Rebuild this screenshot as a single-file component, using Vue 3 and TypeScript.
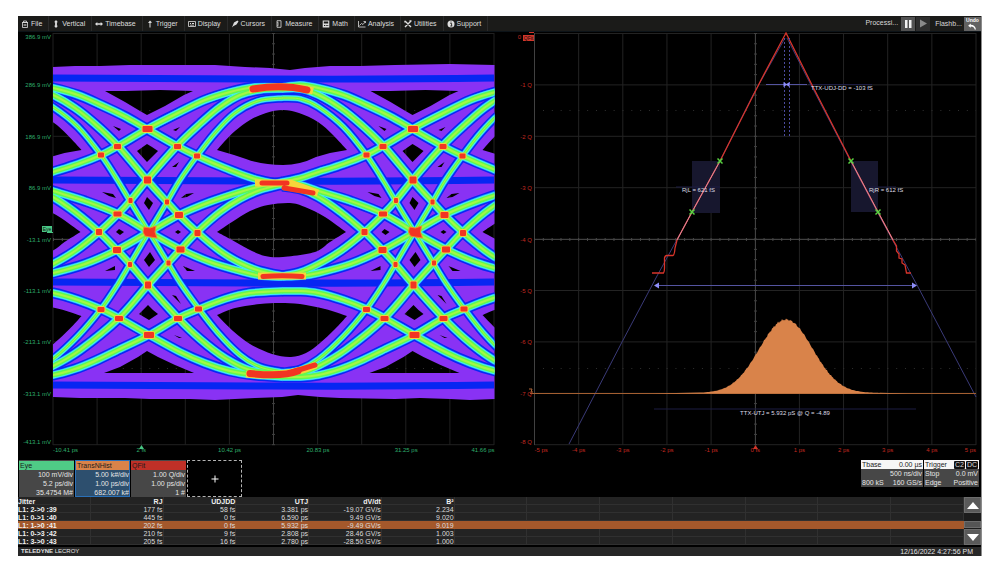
<script setup lang="ts">
type Point = [number, number]

interface Trace {
  points: Point[]
  thin?: boolean
}

interface Descriptor {
  name: string
  kind: string
  lines: string[]
}

const PERIOD = 265.5

const menu = [
  'File', 'Vertical', 'Timebase', 'Trigger', 'Display', 'Cursors',
  'Measure', 'Math', 'Analysis', 'Utilities', 'Support',
]

/* Catmull-Rom spline through the given points */
function spline(points: Point[]): string {
  let d = `M${points[0][0]} ${points[0][1]}`
  for (let i = 0; i < points.length - 1; i++) {
    const a = points[Math.max(i - 1, 0)]
    const b = points[i]
    const c = points[i + 1]
    const e = points[Math.min(i + 2, points.length - 1)]
    const x1 = b[0] + (c[0] - a[0]) / 6
    const y1 = b[1] + (c[1] - a[1]) / 6
    const x2 = c[0] - (e[0] - b[0]) / 6
    const y2 = c[1] - (e[1] - b[1]) / 6
    d += `C${x1.toFixed(1)} ${y1.toFixed(1)} ${x2.toFixed(1)} ${y2.toFixed(1)} ${c[0]} ${c[1]}`
  }
  return d
}

/* The twelve PAM4 level transitions over one unit interval */
const traces: Trace[] = [
  { points: [[17, 87], [35, 85], [53, 88], [78, 95], [101, 105], [124, 116], [147, 129], [177, 146], [197, 156], [225, 168], [255, 179], [283, 185]] },
  { points: [[17, 182], [35, 178], [53, 172], [78, 164], [101, 155], [118, 146], [147, 129], [178, 113], [205, 100], [230, 92], [255, 87], [283, 87]] },
  { points: [[17, 89], [35, 89], [53, 95], [75, 108], [95, 124], [118, 146], [147, 180], [167, 202], [179, 215], [197, 232], [220, 251], [240, 263], [260, 271], [283, 276]] },
  { points: [[17, 276], [35, 272], [53, 264], [75, 251], [99, 232], [118, 214], [130, 201], [147, 180], [177, 146], [200, 124], [220, 107], [240, 95], [260, 90], [283, 89]] },
  { points: [[17, 98], [35, 99], [53, 107], [78, 127], [101, 155], [118, 181], [130, 201], [149, 232], [168, 263], [181, 284], [199, 309], [218, 333], [240, 355], [260, 367], [283, 372]], thin: true },
  { points: [[17, 372], [35, 369], [53, 359], [78, 336], [101, 309], [118, 284], [130, 264], [149, 232], [167, 202], [180, 180], [197, 156], [215, 133], [235, 113], [258, 101], [283, 98]], thin: true },
  { points: [[17, 182], [35, 185], [53, 191], [85, 201], [118, 214], [149, 232], [180, 249], [210, 262], [240, 271], [262, 276], [283, 277]] },
  { points: [[17, 277], [35, 276], [53, 273], [85, 264], [117, 250], [149, 232], [179, 215], [210, 202], [240, 192], [262, 186], [283, 182]] },
  { points: [[17, 186], [35, 189], [53, 197], [75, 212], [99, 232], [117, 250], [130, 264], [148, 285], [178, 318], [200, 339], [225, 358], [250, 370], [283, 374]] },
  { points: [[17, 374], [35, 373], [53, 366], [80, 350], [119, 318], [148, 285], [168, 263], [180, 250], [197, 232], [220, 212], [240, 199], [260, 190], [283, 184]] },
  { points: [[17, 291], [35, 291], [53, 293], [78, 300], [101, 309], [119, 318], [149, 335], [180, 352], [205, 363], [230, 371], [255, 375], [283, 377]] },
  { points: [[17, 377], [35, 377], [53, 375], [75, 369], [95, 361], [120, 349], [149, 335], [178, 318], [199, 309], [225, 299], [250, 293], [283, 291]] },
]
const tracePaths = traces.map((t) => ({ d: spline(t.points), thin: !!t.thin }))
const layers = ['navy', 'azure', 'cyan', 'green', 'lime']

const shifts = [-PERIOD, 0, PERIOD]
const unitShifts = [0, PERIOD]

/* Regions of the eye with no hits, for one unit interval */
const openings = [
  spline([[217, 150], [224, 142], [235, 131], [250, 120], [266, 113], [283, 110], [299, 113], [318, 122], [333, 135], [347, 150]]) +
    'L330 153L316 157Q300 165 283 165Q262 165 246 159L234 155Z',
  spline([[217, 232], [232, 222], [250, 211], [268, 205], [290, 203], [305, 207], [325, 217], [346, 232]]) +
    spline([[346, 232], [330, 242], [315, 252], [283, 257], [265, 256], [248, 249], [232, 240], [217, 232]]).replace('M', 'L') + 'Z',
  spline([[217, 315], [235, 308], [260, 304], [280, 303], [300, 304], [325, 309], [347, 316]]) +
    spline([[347, 316], [335, 329], [320, 343], [306, 353], [291, 357], [272, 354], [250, 344], [233, 331], [217, 315]]).replace('M', 'L') + 'Z',
]
const gaps = [
  'M105 91L125 91 160 90 193 91 184 95 165 106 147 115 140 111 125 102Z',
  'M147 351L158 357 175 365 194 373 104 373 120 367 138 357Z',
  'M147 144L152 147 158 151 147 162 137 151Z',
  'M148 305L153 310 158 314 149 320 139 314Z',
  'M147 197L153 203 149 210 144 203Z',
  'M150 252L155 260 149 267 144 260Z',
  'M116 232L119 229 124 232 120 235Z',
  'M175 232L178 230 181 232 178 234Z',
  'M113 126L121 129 119 131Z',
  'M173 130L180 127 176 131Z',
  'M102 192L113 194 116 198 109 196Z',
  'M181 198L186 194 194 193 187 197Z',
  'M172 167L179 162 176 167Z',
  'M105 271L115 266 115 270Z',
  'M183 266L195 271 187 271Z',
  'M172 295L176 296 181 304Z',
  'M174 335L182 338 179 338Z',
]

/* Brightest spots where traces cross: x, y, width, height */
const hits: number[][] = [
  [147.5, 129, 10, 6], [117.5, 146.5, 7, 5], [177.5, 146.5, 7, 5], [101, 155, 6, 5],
  [197, 156, 6, 5], [147.5, 180, 7, 7], [130.5, 200.5, 4, 5], [167, 202, 4, 5],
  [117.5, 214, 8, 5], [179, 215, 8, 6], [99, 232, 6, 6], [197.5, 233, 6, 6],
  [117, 250, 8, 6], [180.5, 249.5, 8, 6], [130, 264.5, 4, 5], [168.5, 263, 4, 5],
  [148, 285, 6, 7], [101, 309.5, 7, 5], [198.5, 309, 7, 5], [119, 318.5, 8, 5],
  [178, 318.5, 8, 5], [149, 335, 10, 6],
]

const flatLevels = [78, 180, 282, 385]

const leftCols = Array.from({ length: 11 }, (_, i) => 53 + i * 44.1)
const rightCols = Array.from({ length: 11 }, (_, i) => 534.5 + i * 44.15)
const rows = Array.from({ length: 9 }, (_, i) => 33.5 + i * 51.4)
const minorRows = Array.from({ length: 41 }, (_, i) => 33.5 + i * 10.28)

const voltLabels = ['386.9', '286.9', '186.9', '86.9', '-13.1', '-113.1', '-213.1', '-313.1', '-413.1']
const labelY = (i: number): number => (i === 0 ? 39 : i === 8 ? 444 : 36 + i * 51.4)
const timeLabels = ['-10.41 ps', '2 fs', '10.42 ps', '20.83 ps', '31.25 ps', '41.66 ps']

function anchor(i: number, last: number): string {
  return i === 0 ? 'start' : i === last ? 'end' : 'middle'
}

function histogram(): string {
  let d = 'M652 393.5'
  for (let x = 700; x <= 880; x++) {
    const z = (x - 786) / 26.5
    const ripple = Math.sin(x * 2.3) * Math.cos(x * 0.9) * 1.3
    const bell = Math.exp((-z * z) / 2)
    d += `L${x} ${(393 - 73.5 * bell - ripple * Math.sqrt(bell)).toFixed(1)}`
  }
  return d + 'L908 393.5Z'
}
const histogramPath = histogram()

const crosses: Point[] = [[720, 161], [692, 212], [851, 161], [878, 212]]

const descriptors: Descriptor[] = [
  { name: 'Eye', kind: 'eye', lines: ['100 mV/div', '5.2 ps/div', '35.4754 M#'] },
  { name: 'TransNHist', kind: 'hist', lines: ['5.00 k#/div', '1.00 ps/div', '682.007 k#'] },
  { name: 'QFit', kind: 'qfit', lines: ['1.00 Q/div', '1.00 ps/div', '1 #'] },
]

const heads = ['Jitter', 'RJ', 'UDJDD', 'UTJ', 'dV/dt', 'B²']
const measurements = [
  ['L1: 2->0 :39', '177 fs', '58 fs', '3.381 ps', '-19.07 GV/s', '2.234'],
  ['L1: 0->1 :40', '445 fs', '0 fs', '6.590 ps', '9.49 GV/s', '9.020'],
  ['L1: 1->0 :41', '202 fs', '0 fs', '5.932 ps', '-9.49 GV/s', '9.019'],
  ['L1: 0->3 :42', '210 fs', '9 fs', '2.808 ps', '28.46 GV/s', '1.003'],
  ['L1: 3->0 :43', '205 fs', '16 fs', '2.780 ps', '-28.50 GV/s', '1.000'],
]
const selectedRow = 2
</script>

<template>
  <main class="scope">
    <header class="topbar">
      <nav class="menu" aria-label="Main menu">
        <button v-for="item in menu" :key="item" type="button" class="menu-item">
          <svg class="icon" viewBox="0 0 8 8" aria-hidden="true">
            <g v-if="item === 'File'" class="line"><path d="M1.5 2.5h5v5h-5zM2.5 2.5V1h3v1.5M1 2.5h6M3.2 4v2M4.8 4v2" /></g>
            <path v-else-if="item === 'Vertical'" d="M4 0L6 2.300H4.900V5.700H6L4 8 2 5.700H3.100V2.300H2Z" />
            <path v-else-if="item === 'Timebase'" d="M0 4L2.300 2V3.300H5.700V2L8 4 5.700 6V4.700H2.300V6Z" />
            <g v-else-if="item === 'Trigger'"><path d="M3.500 1h1v6.500h-1zM2 3L4 .5 6 2.500 4.500 3Z" /></g>
            <g v-else-if="item === 'Display'"><path class="line" d="M.5 1.500h7v5h-7z" /><path d="M2 3h1v1H2zM4 3h2v1H4zM2 4.700h4v.8H2z" /></g>
            <path v-else-if="item === 'Cursors'" d="M6.500 .5L7.500 1.500 5.500 4.500 2.500 6 1 7.500 2 5 3 2.500Z" />
            <g v-else-if="item === 'Measure'" class="line"><path d="M2 .7h4v6.600H2zM2 2.300h1.500M2 4h2M2 5.700h1.500" /></g>
            <g v-else-if="item === 'Math'"><path fill-rule="evenodd" d="M.7.5h6.600v7H.7zM1.800 1.500v2h4.400v-2zM2 5v1h1V5zM3.700 5v1h1V5zM5.300 5v1h1V5z" /></g>
            <g v-else-if="item === 'Analysis'" class="line"><path d="M.5 1v6h7M1.500 5.500L3.500 3.500 5 4.500 7.300 1.700M5.500 1.500h2v1.500" /></g>
            <g v-else-if="item === 'Utilities'" class="line thick"><path d="M1 1L7 7M7 1L1 7M1 .7V2.500M5.500 1h2" /></g>
            <g v-else><circle cx="4" cy="4" r="3.500" /><path class="cut" d="M3.300 3.400h1.300v2.500M3.300 6h2M3.500 2h1" /></g>
          </svg>
          <span>{{ item }}</span>
        </button>
      </nav>
      <div class="status">
        <span class="state">Processi...</span>
        <button type="button" class="tool" aria-label="Pause">
          <svg viewBox="0 0 14 14" aria-hidden="true"><path d="M4 3H6.500V11H4ZM8 3H10.500V11H8Z" /></svg>
        </button>
        <button type="button" class="tool dim" aria-label="Play">
          <svg viewBox="0 0 14 14" aria-hidden="true"><path d="M4 2.500L11 6.500 4 10.500Z" /></svg>
        </button>
        <span class="flash">Flashb...</span>
        <button type="button" class="undo">
          <span>Undo</span>
          <svg viewBox="0 0 12 8" aria-hidden="true"><path d="M1 3L4 .5V2Q9 2 10 7.500H8.500Q8 4 4 4V5.500Z" /></svg>
        </button>
      </div>
    </header>

    <section class="plots">
      <svg class="plot" viewBox="18 32 496 427" role="img" aria-label="Eye diagram">
        <defs>
          <clipPath id="eye-clip"><rect x="53" y="33" width="441.500" height="412" /></clipPath>
          <mask id="eye-mask" maskUnits="userSpaceOnUse" x="18" y="32" width="496" height="427">
            <path fill="#fff" d="M53 67L75 66 100 66 130 65 175 65 215 65 245 67 270 68 290 70 305 68 330 66 360 66 395 65 450 64 495 65V399L470 400 450 399 420 398 395 399 340 398 320 397 298 395 282 397 255 398 215 400 190 399 150 399 125 398 80 398 53 397Z" />
            <g v-for="s in shifts" :key="s" :transform="`translate(${s} 0)`">
              <path v-for="(d, i) in openings" :key="i" :d="d" fill="#000" />
            </g>
            <g v-for="s in unitShifts" :key="s" :transform="`translate(${s} 0)`">
              <path v-for="(d, i) in gaps" :key="i" :d="d" fill="#000" />
            </g>
          </mask>
        </defs>

        <g class="grid">
          <path v-for="x in leftCols" :key="x" :d="`M${x} 33V445`" />
          <path v-for="y in rows" :key="y" :d="`M53 ${y}H494`" />
        </g>
        <path class="axis" d="M273.500 33V445M53 239.500H494" />
        <path v-for="y in minorRows" :key="y" class="axis" :d="`M272 ${y}h3`" />
        <path class="axis-ticks" d="M53 239.500H494" />
        <path class="dots" d="M61 110.500H494M61 368.500H494" />

        <g clip-path="url(#eye-clip)">
          <g mask="url(#eye-mask)"><rect class="violet" x="53" y="60" width="442" height="345" /></g>
          <path v-for="y in flatLevels" :key="y" class="flat" :d="`M53 ${y}Q150 ${y + 0.5} 273 ${y + 1}T494 ${y}`" />
          <g v-for="layer in layers" :key="layer" :class="['layer', layer]">
            <g v-for="s in shifts" :key="s" :transform="`translate(${s} 0)`">
              <path v-for="(t, i) in tracePaths" :key="i" :d="t.d" :class="{ thin: t.thin }" />
            </g>
          </g>

          <g class="warm">
            <path d="M249 90Q282 83 313 91M255 183H290L318 193M258 276H306M246 374Q285 378 316 365" />
          </g>
          <g class="hot">
            <path d="M253 89Q282 84 307 90" />
            <path class="mid" d="M262 183H287M284 188L313 193" />
            <path class="mid" d="M263 276.500Q282 275 302 276.500" />
            <path d="M250 373.500Q283 377 298 371" />
            <path class="mid" d="M292 372L315 365" />
          </g>

          <g v-for="s in unitShifts" :key="s" :transform="`translate(${s} 0)`">
            <rect v-for="(h, i) in hits" :key="`w${i}`" class="halo" :x="h[0] - h[2] / 2 - 1" :y="h[1] - h[3] / 2 - 1" :width="h[2] + 2" :height="h[3] + 2" rx="3" />
            <rect v-for="(h, i) in hits" :key="`r${i}`" class="core" :x="h[0] - h[2] / 2" :y="h[1] - h[3] / 2" :width="h[2]" :height="h[3]" rx="1" />
            <path class="core ring" d="M144 227L150 228 156 226 155 232 157 238 150 237 145 236 143 232Z" />
          </g>
        </g>

        <g class="label green-text">
          <text v-for="(v, i) in voltLabels" :key="v" x="51" :y="labelY(i)" text-anchor="end">{{ v }} mV</text>
          <text v-for="(t, i) in timeLabels" :key="t" :x="53 + i * 88.3" y="452" :text-anchor="anchor(i, 5)">{{ t }}</text>
        </g>
        <path class="green-mark" d="M141.500 445L144 449H139Z" />
        <rect class="green-mark" x="42" y="226" width="10" height="6" />
        <path class="green-mark" d="M47 232h6v1h-6z" />
        <text class="badge" x="47" y="231" text-anchor="middle">Eye</text>
      </svg>

      <svg class="plot" viewBox="514 32 467 427" role="img" aria-label="Q-scale jitter fit">
        <g class="grid strong">
          <path v-for="x in rightCols" :key="x" :d="`M${x} 33V445`" />
          <path v-for="y in rows" :key="y" :d="`M534 ${y}H976`" />
        </g>
        <path class="axis" d="M534.500 33V445M755.500 33V445M534 239.500H976" />
        <path v-for="y in minorRows" :key="y" class="axis" :d="`M754 ${y}h3`" />
        <path class="axis-ticks" d="M534 239.500H976" />
        <path class="dots" d="M543 110.500H976M543 368.500H976" />

        <rect class="zone" x="692" y="161" width="28" height="52" />
        <rect class="zone" x="851" y="161" width="27" height="51" />
        <path class="faint" d="M676 187H720M870 187H896M808 84.500H872M654 409H916" />

        <path class="fit" d="M569 444L622 342 657 276 719 163 753 95 785 38M787 38L812 87 851 162 880 217 917 285 976 397" />
        <path class="curve" d="M652 273H663.500Q664.500 272 664.500 268V258Q665 255.500 667 255.500H673Q674.500 255 675 248L677 240 692 212 720 161 760 82 786 33 812 85 851 161 878 212 893 240 896.500 246V251L899 254V258L902 259V263L905 265 906.500 273H911" />
        <path class="overlay" d="M677 240L692 212 720 161M851 161L878 212 893 240" />

        <path class="bound" d="M784.500 38V136M789.500 38V136" />
        <path class="span" d="M766 84.500H807M657 285.500H915" />
        <path class="arrow" d="M654 285.500L659 282.500V288.500ZM917 285.500L912 282.500V288.500ZM783.500 82L786.500 84 789.500 82V87L786.500 85 783.500 87Z" />

        <path class="base" d="M530 393.500H976" />
        <path class="bell" :d="histogramPath" />

        <path v-for="c in crosses" :key="c[0]" class="cross" :d="`M${c[0] - 2.5} ${c[1] - 2.5}l5 5m0-5l-5 5`" />

        <g class="label red-text">
          <text x="521" y="39" text-anchor="end">0</text>
          <text v-for="n in 8" :key="n" x="532" :y="labelY(n)" text-anchor="end">-{{ n }} Q</text>
          <text v-for="n in 11" :key="`x${n}`" :x="490.350 + n * 44.150" y="452" :text-anchor="anchor(n - 1, 10)">{{ n === 6 ? '0 fs' : `${n - 6} ps` }}</text>
        </g>
        <rect class="red-mark" x="523" y="35" width="11" height="6" />
        <path class="red-mark" d="M529 32h5v1h-5zM755.500 445L758 449H753Z" />
        <text class="badge" x="528.500" y="40" text-anchor="middle">QFit</text>
        <path class="orange-mark" d="M529 389h3l-1 3h2" />

        <g class="label note">
          <text x="811" y="90">TTX-UDJ-DD = -103 fS</text>
          <text x="682" y="192">RjL = 621 fS</text>
          <text x="869" y="192">RjR = 612 fS</text>
          <text x="785" y="415" text-anchor="middle">TTX-UTJ = 5.932 pS @ Q = -4.89</text>
        </g>
      </svg>
    </section>

    <section class="descriptors">
      <button v-for="d in descriptors" :key="d.name" type="button" :class="['card', d.kind]">
        <span class="card-head">{{ d.name }}</span>
        <span v-for="line in d.lines" :key="line" class="card-line">{{ line }}</span>
      </button>
      <button type="button" class="add" aria-label="Add trace">
        <svg viewBox="0 0 8 8" aria-hidden="true"><path d="M4 .5V7.500M.5 4H7.500" /></svg>
      </button>
      <div class="acquisition">
        <button type="button" class="card wide">
          <span class="card-head split"><span>Tbase</span><span>0.00 µs</span></span>
          <span class="card-line">500 ns/div</span>
          <span class="card-line split"><span>800 kS</span><span>160 GS/s</span></span>
        </button>
        <button type="button" class="card">
          <span class="card-head split"><span>Trigger</span><span class="chips"><b>C2</b><b>DC</b></span></span>
          <span class="card-line split"><span>Stop</span><span>0.0 mV</span></span>
          <span class="card-line split"><span>Edge</span><span>Positive</span></span>
        </button>
      </div>
    </section>

    <section class="results">
      <table>
        <thead>
          <tr>
            <th v-for="h in heads" :key="h" scope="col">{{ h }}</th>
            <td v-for="n in 7" :key="n"></td>
          </tr>
        </thead>
        <tbody>
          <tr v-for="(row, r) in measurements" :key="r" :class="{ selected: r === selectedRow }">
            <th scope="row">{{ row[0] }}</th>
            <td v-for="(cell, c) in row.slice(1)" :key="c">{{ cell }}</td>
            <td v-for="n in 7" :key="`e${n}`"></td>
          </tr>
        </tbody>
      </table>
      <div class="scroller">
        <button type="button" aria-label="Scroll up"><svg viewBox="0 0 12 7" aria-hidden="true"><path d="M0 7L6 0 12 7Z" /></svg></button>
        <div class="thumb"></div>
        <button type="button" aria-label="Scroll down"><svg viewBox="0 0 12 7" aria-hidden="true"><path d="M0 0L6 7 12 0Z" /></svg></button>
      </div>
    </section>

    <footer class="footer">
      <span><strong>TELEDYNE</strong> LECROY</span>
      <time datetime="2022-12-16T16:27:56">12/16/2022 4:27:56 PM</time>
    </footer>
  </main>
</template>

<style>
body {
  background: #fff;
  padding: 16px 21px 0 18px;
}
</style>

<style scoped>
.scope {
  background: #000;
  color: #d8d8d8;
  font-family: "Liberation Sans", Arial, sans-serif;
  font-size: 7px;
  box-shadow: 1px 0 #8c8c8c;
}

button {
  margin: 0;
  padding: 0;
  border: 0;
  font: inherit;
  color: inherit;
  background: none;
}

.topbar {
  display: flex;
  justify-content: space-between;
  height: 15px;
  background: #1b1b19;
  border-bottom: 1px solid #0c1318;
}

.menu {
  display: flex;
}

.menu-item {
  display: flex;
  align-items: center;
  gap: 2px;
  padding: 0 6px 0 3px;
  border-right: 1px solid #2b2b2b;
  color: #dedede;
}

.icon {
  width: 8px;
  height: 8px;
  fill: #dedede;
}

.line {
  fill: none;
  stroke: #dedede;
  stroke-width: 0.8;
}

.thick {
  stroke-width: 1.4;
}

.cut {
  fill: none;
  stroke: #1b1b19;
  stroke-width: 0.9;
}

.status {
  display: flex;
  align-items: center;
  gap: 1px;
}

.state {
  padding: 0 2px 2px 0;
}

.flash {
  padding: 0 1px 0 4px;
}

.tool {
  display: flex;
  width: 14px;
  height: 14px;
  background: #525252;
  fill: #f2f2f2;
}

.tool.dim {
  background: #2e2e2e;
  fill: #8a8a8a;
}

.undo {
  display: flex;
  flex-direction: column;
  align-items: center;
  width: 17px;
  height: 14px;
  background: #626262;
  color: #fff;
  fill: #fff;
  font-size: 5px;
  font-weight: bold;
  line-height: 6px;
}

.undo svg {
  width: 11px;
  height: 7px;
}

.plots {
  display: grid;
  grid-template-columns: 496fr 467fr;
}

.plot {
  display: block;
  width: 100%;
  height: auto;
  fill: none;
}

.grid {
  stroke: #202020;
  stroke-width: 1;
}

.grid.strong {
  stroke: #232323;
}

.axis {
  stroke: #414141;
  stroke-width: 1;
}

.axis-ticks {
  stroke: #484848;
  stroke-width: 3;
  stroke-dasharray: 1 7.83;
}

.dots {
  stroke: #303030;
  stroke-width: 1;
  stroke-dasharray: 1 7.83;
}

.violet {
  fill: #8932f4;
}

.flat {
  stroke: #0726f2;
  stroke-width: 7;
}

.navy {
  stroke: #0828f5;
  stroke-width: 11;
}

.azure {
  stroke: #1c9cff;
  stroke-width: 8;
}

.cyan {
  stroke: #45eef0;
  stroke-width: 7;
}

.green {
  stroke: #62f84e;
  stroke-width: 5;
}

.lime {
  stroke: #a4f744;
  stroke-width: 2;
}

.navy .thin {
  stroke-width: 9;
}

.azure .thin {
  stroke-width: 6;
}

.cyan .thin {
  stroke-width: 5;
}

.green .thin {
  stroke-width: 3;
}

.lime .thin {
  stroke-width: 1;
}

.warm {
  stroke: #f7d43a;
  stroke-width: 7;
}

.hot {
  stroke: #f23522;
  stroke-width: 7;
  stroke-linecap: round;
}

.mid {
  stroke-width: 5;
}

.halo {
  fill: #f6d23c;
}

.core {
  fill: #f23522;
}

.ring {
  stroke: #f28a2c;
  stroke-width: 1;
}

.label {
  font-size: 6px;
}

.green-text {
  fill: #2fae6c;
}

.red-text {
  fill: #c42a20;
}

.note {
  fill: #dcdce4;
}

.green-mark {
  fill: #49c684;
}

.red-mark {
  fill: #d2362a;
}

.orange-mark {
  stroke: #b5683a;
}

.badge {
  font-size: 5px;
  fill: #101010;
}

.zone {
  fill: #17172e;
}

.faint {
  stroke: #1d1d42;
}

.fit {
  stroke: #3a3a78;
  stroke-width: 1;
}

.curve {
  stroke: #d8352b;
  stroke-width: 1.3;
}

.overlay {
  stroke: #d98a9c;
  stroke-width: 1;
}

.bound {
  stroke: #4c4c9e;
  stroke-dasharray: 2 2;
}

.span {
  stroke: #5454a0;
  stroke-width: 1;
}

.arrow {
  fill: #8e8efa;
}

.base {
  stroke: #a35f31;
}

.bell {
  fill: #d9834a;
}

.cross {
  stroke: #58d240;
  stroke-width: 1.5;
}

.descriptors {
  display: flex;
  gap: 1px;
  padding: 1px 2px 0 1px;
}

.card {
  display: block;
  box-sizing: border-box;
  width: 55px;
  background: #474747;
  color: #e6e6e6;
  text-align: right;
  line-height: 9px;
}

.card.wide {
  width: 62px;
}

.card-head,
.card-line {
  display: block;
  padding: 0 1px;
}

.card-head {
  text-align: left;
  color: #1c1c1c;
  background: #f6f6f6;
}

.card .split {
  display: flex;
  justify-content: space-between;
}

.eye .card-head {
  background: #4fcb86;
}

.hist {
  background: #2d4f6e;
  box-shadow: inset 0 0 0 1px #2a70b8;
}

.hist .card-head {
  margin: 0 1px;
  background: #d9834a;
}

.qfit .card-head {
  background: #bf3027;
}

.add {
  display: flex;
  align-items: center;
  justify-content: center;
  box-sizing: border-box;
  width: 55px;
  height: 37px;
  border: 1px dashed #b5b5b5;
}

.add svg {
  width: 8px;
  height: 8px;
  stroke: #fff;
}

.acquisition {
  display: flex;
  align-items: flex-start;
  gap: 1px;
  margin-left: auto;
}

.chips {
  display: flex;
  align-items: center;
  gap: 1px;
}

.chips b {
  padding: 0 1px;
  background: #111;
  color: #d8d8d8;
  font-weight: normal;
  line-height: 8px;
  border-radius: 1px;
}

.results {
  display: grid;
  grid-template-columns: minmax(0, 1fr) 17px;
  padding-bottom: 2px;
  background: #000;
}

table {
  width: 100%;
  table-layout: fixed;
  border-collapse: collapse;
  background: #232323;
}

th,
td {
  height: 8px;
  padding: 0 1px 0 0;
  box-sizing: border-box;
  line-height: 7px;
  text-align: right;
  white-space: nowrap;
  color: #dcdcdc;
  box-shadow: inset -1px -1px #303030;
}

th {
  color: #f2f2f2;
}

th:first-child {
  text-align: left;
}

.selected th,
.selected td {
  background: #a4582b;
  box-shadow: none;
}

.scroller {
  display: flex;
  flex-direction: column;
  justify-content: space-between;
  background: #1c1c1c;
}

.scroller button {
  display: flex;
  align-items: center;
  justify-content: center;
  box-sizing: border-box;
  height: 16px;
  background: #5a5a5a;
  border: 1px solid #6c6c6c;
}

.scroller svg {
  width: 12px;
  height: 7px;
  fill: #fff;
}

.thumb {
  height: 5px;
  margin-top: 6px;
  background: #555;
  border: 1px solid #6c6c6c;
}

.footer {
  display: flex;
  justify-content: space-between;
  padding: 0 8px 0 3px;
  line-height: 9px;
  background: #272727;
  color: #e4e4e4;
}

.footer span {
  font-size: 6px;
}
</style>
